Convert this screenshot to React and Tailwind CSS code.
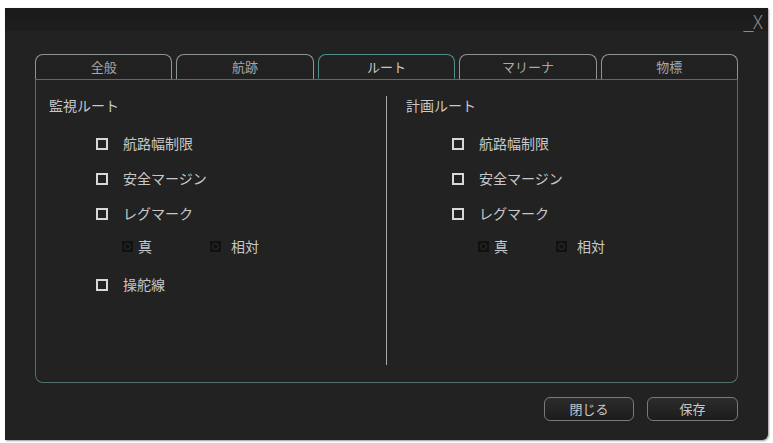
import React, { useState } from "react";

const tabs = ["全般", "航跡", "ルート", "マリーナ", "物標"];

const CheckRow = ({ label }) => (
  <div className="flex items-center h-[35px]">
    <span className="w-[12px] h-[12px] border-2 border-[#d8d8d8] mr-[15px]" />
    <span className="text-[#c8c8c8] text-[14px]">{label}</span>
  </div>
);

const RadioRow = ({ offset, gap }) => (
  <div className="flex items-center h-[30px]" style={{ paddingLeft: offset }}>
    <span className="flex items-center justify-center w-[11px] h-[11px] bg-[#111] mr-[5px]">
      <span className="w-[7px] h-[7px] rounded-full border border-[#333]" />
    </span>
    <span className="text-[#c8c8c8] text-[14px]" style={{ marginRight: gap }}>真</span>
    <span className="flex items-center justify-center w-[11px] h-[11px] bg-[#111] mr-[10px]">
      <span className="w-[7px] h-[7px] rounded-full border border-[#333]" />
    </span>
    <span className="text-[#c8c8c8] text-[14px]">相対</span>
  </div>
);

const Section = ({ title, padTitle, padList, radioGap, showExtra }) => (
  <div className="flex flex-col pt-[15px]">
    <div className="text-[#c8c8c8] text-[14px] h-[22px]" style={{ paddingLeft: padTitle }}>
      {title}
    </div>
    <div className="flex flex-col mt-[9px]" style={{ paddingLeft: padList }}>
      <CheckRow label="航路幅制限" />
      <CheckRow label="安全マージン" />
      <CheckRow label="レグマーク" />
      <RadioRow offset={26} gap={radioGap} />
      {showExtra && (
        <div className="mt-[6px]">
          <CheckRow label="操舵線" />
        </div>
      )}
    </div>
  </div>
);

export default function App() {
  const [active, setActive] = useState(2);

  return (
    <div
      className="w-[773px] h-[443px] bg-white pt-[8px] pl-[5px] text-[13px]"
      style={{ fontFamily: '"Noto Sans CJK JP", "Noto Sans", sans-serif' }}
    >
      <div className="w-[763px] h-[432px] bg-[#222222] rounded-br-[6px] shadow-[1px_1px_2px_rgba(0,0,0,0.4)] flex flex-col">
        {/* タイトルバー */}
        <div className="h-[23px] bg-gradient-to-b from-[#1a1a1a] to-[#1e1e1e] flex justify-end items-end pr-[6px]">
          <span className="text-[#8c8c8c] text-[19px] leading-none tracking-[-1px] font-light mb-[1px]">_X</span>
        </div>

        <div className="px-[30px] pt-[23px]">
          {/* タブ */}
          <div className="flex gap-[4px] border-b border-[#54706e]">
            {tabs.map((t, i) => (
              <button
                key={t}
                onClick={() => setActive(i)}
                className={
                  i === active
                    ? "flex-1 h-[25px] rounded-t-[8px] border border-[#4f8e8e] border-b-[#222222] -mb-px bg-[#222222] text-[#c8c8c8] text-[13px]"
                    : "flex-1 h-[25px] rounded-t-[8px] border border-b-0 border-[#8c9494] bg-[#212121] text-[#a8a8a8] text-[13px]"
                }
              >
                {t}
              </button>
            ))}
          </div>

          {/* パネル */}
          <div className="h-[303px] border border-t-0 border-[#54706e] rounded-b-[8px] flex">
            <div className="w-[350px]">
              <Section title="監視ルート" padTitle={13} padList={60} radioGap={58} showExtra />
            </div>
            <div className="w-px bg-[#a8a8a8] mt-[16px] mb-[17px]" />
            <div className="flex-1">
              <Section title="計画ルート" padTitle={19} padList={65} radioGap={48} />
            </div>
          </div>
        </div>

        {/* ボタン */}
        <div className="flex justify-end gap-[13px] pr-[30px] mt-[14px]">
          <button className="w-[90px] h-[24px] rounded-[6px] border border-[#7a7a7a] bg-gradient-to-b from-[#2c2c2c] to-[#1c1c1c] text-[#c8c8c8] text-[13px]">
            閉じる
          </button>
          <button className="w-[91px] h-[24px] rounded-[6px] border border-[#7a7a7a] bg-gradient-to-b from-[#2c2c2c] to-[#1c1c1c] text-[#c8c8c8] text-[13px]">
            保存
          </button>
        </div>
      </div>
    </div>
  );
}
